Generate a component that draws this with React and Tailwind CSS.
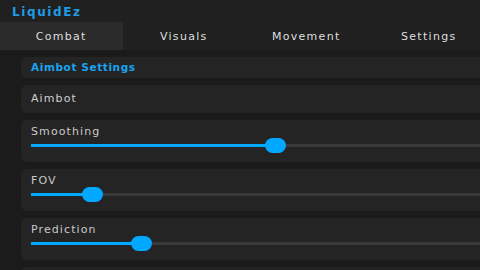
import React from "react";

const font = { fontFamily: '"DejaVu Sans", Verdana, sans-serif' };

function Slider({ label, pos }) {
  return (
    <div className="rounded-[6px] bg-[#242424] pl-[10px] pt-[4px] pb-[9px]">
      <div className="text-[11px] leading-[15px] tracking-[1.1px] text-[#c9c9c9]">{label}</div>
      <div className="relative h-[15px] -mt-[1px]">
        <div className="absolute left-0 right-0 top-[6px] h-[3px] bg-[#3a3a3a]" />
        <div
          className="absolute left-0 top-[6px] h-[3px] bg-[#00a8ff]"
          style={{ width: pos - 31 }}
        />
        <div
          className="absolute top-0 h-[15px] w-[21px] rounded-full bg-[#00a8ff]"
          style={{ left: pos - 31 - 10.5 }}
        />
      </div>
    </div>
  );
}

export default function App() {
  const tabs = ["Combat", "Visuals", "Movement", "Settings"];
  return (
    <div className="w-[480px] h-[270px] overflow-hidden bg-[#1b1b1b]" style={font}>
      <div className="w-[540px]">
        <div className="h-[22px] bg-[#202020] flex items-center pl-[12px]">
          <span className="text-[12px] leading-[14px] font-bold tracking-[1.6px] text-[#1e9de6] pt-[1px]">LiquidEz</span>
        </div>
        <div className="h-[28px] bg-[#202020] flex">
          {tabs.map((t, i) => (
            <div
              key={t}
              className={
                "w-[122.5px] flex items-center justify-center pt-[2px] text-[11px] tracking-[1.3px] text-[#dedede] " +
                (i === 0 ? "bg-[#2b2b2b]" : "")
              }
            >
              {t}
            </div>
          ))}
        </div>
        <div className="pt-[7px] pl-[21px] flex flex-col gap-[7px]">
          <div className="h-[21px] rounded-[6px] bg-[#242424] flex items-center pl-[10px]">
            <span className="text-[10.5px] font-bold tracking-[0.6px] text-[#1ba3ef]">Aimbot Settings</span>
          </div>
          <div className="h-[28px] rounded-[6px] bg-[#242424] flex items-center pl-[10px] pt-[1px]">
            <span className="text-[11px] tracking-[1.1px] text-[#cfcfcf]">Aimbot</span>
          </div>
          <Slider label="Smoothing" pos={275} />
          <Slider label="FOV" pos={92} />
          <Slider label="Prediction" pos={141.5} />
          <div className="h-[42px] rounded-[6px] bg-[#242424]" />
        </div>
      </div>
    </div>
  );
}
